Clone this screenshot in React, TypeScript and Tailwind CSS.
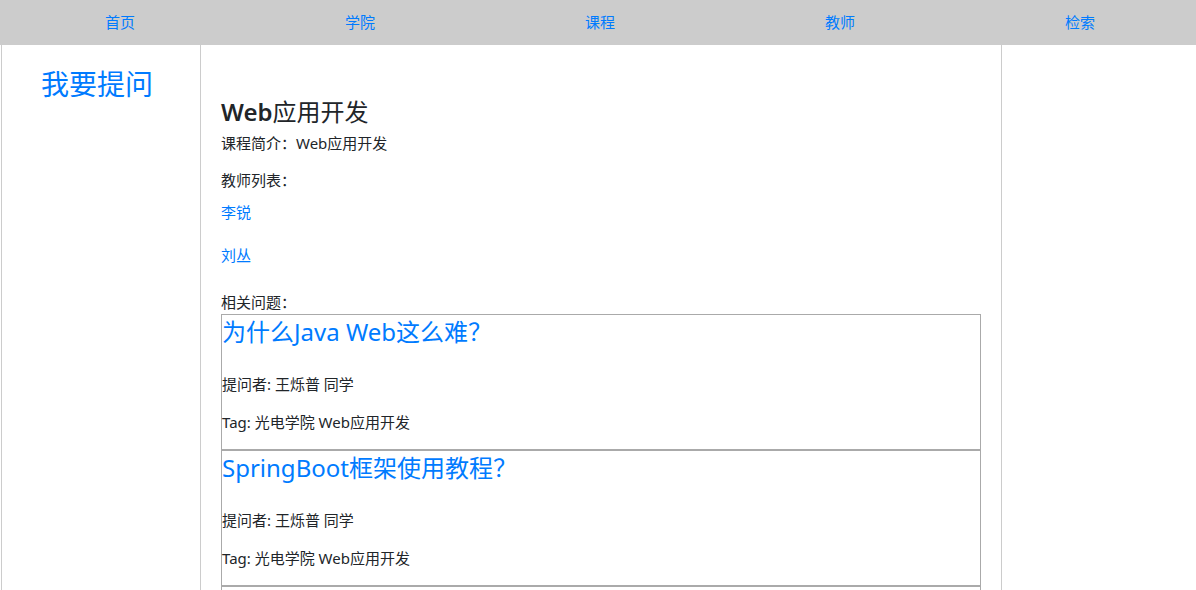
import React from "react";

const font = { fontFamily: '"Noto Sans", "Noto Sans CJK SC", sans-serif' };

const navItems = ["首页", "学院", "课程", "教师", "检索"];

const questions = [
  { title: "为什么Java Web这么难？", asker: "王烁普 同学", tag: "光电学院 Web应用开发" },
  { title: "SpringBoot框架使用教程？", asker: "王烁普 同学", tag: "光电学院 Web应用开发" },
];

function Question({ q }: { q: (typeof questions)[number] }) {
  return (
    <div className="w-[760px] border border-[#aaaaaa] pt-[2px] pb-[16px]">
      <a className="block text-[24px] leading-[29px] text-[#007bff]" href="#">
        {q.title}
      </a>
      <p className="mt-[28px] text-[15px] leading-[21px] text-[#212529]">提问者: {q.asker}</p>
      <p className="mt-[17px] text-[15px] leading-[21px] text-[#212529]">Tag: {q.tag}</p>
    </div>
  );
}

export default function App() {
  return (
    <div className="h-screen w-full overflow-hidden bg-white" style={font}>
      <nav className="flex h-[45px] w-full overflow-hidden bg-[#cccccc]">
        {navItems.map((n) => (
          <a
            key={n}
            href="#"
            className="flex w-[240px] shrink-0 items-center justify-center text-[15px] leading-[21px] text-[#007bff]"
          >
            {n}
          </a>
        ))}
      </nav>
      <div className="flex min-h-[545px]">
        <div className="ml-px w-[200px] shrink-0 border-x border-[#cccccc] pl-[39px]">
          <a href="#" className="mt-[22px] block text-[28px] leading-[34px] text-[#007bff]">
            我要提问
          </a>
        </div>
        <div className="w-[801px] shrink-0 border-r border-[#cccccc] pl-[20px]">
          <h3 className="mt-[52px] text-[24px] font-normal leading-[29px] text-[#212529]">
            <span className="font-semibold">Web</span>应用开发
          </h3>
          <p className="mt-[7px] text-[15px] leading-[21px] text-[#212529]">课程简介：Web应用开发</p>
          <p className="mt-[16px] text-[15px] leading-[21px] text-[#212529]">教师列表：</p>
          <a href="#" className="mt-[11px] block text-[15px] leading-[21px] text-[#007bff]">
            李锐
          </a>
          <a href="#" className="mt-[22px] block text-[15px] leading-[21px] text-[#007bff]">
            刘丛
          </a>
          <p className="mt-[26px] text-[15px] leading-[21px] text-[#212529]">相关问题：</p>
          <div className="mt-px flex flex-col">
            {questions.map((q) => (
              <Question key={q.title} q={q} />
            ))}
            <div className="h-[136px] w-[760px] border border-[#aaaaaa]" />
          </div>
        </div>
        <div className="flex-1" />
      </div>
    </div>
  );
}
